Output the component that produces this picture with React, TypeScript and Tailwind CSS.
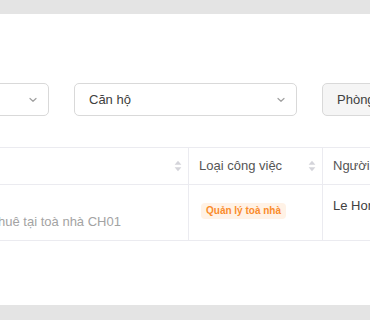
import React from "react";

const Chevron = () => (
  <svg width="10" height="6" viewBox="0 0 10 6" fill="none">
    <path d="M2 1.5 L5 4.3 L8 1.5" stroke="#a0a0a0" strokeWidth="1.2" strokeLinecap="round" strokeLinejoin="round" />
  </svg>
);

const SortIcon = () => (
  <svg width="8" height="12" viewBox="0 0 8 12">
    <path d="M4 0.8 L7.4 4.8 L0.6 4.8 Z" fill="#d4d4da" />
    <path d="M4 11.2 L7.4 7.2 L0.6 7.2 Z" fill="#d4d4da" />
  </svg>
);

export default function App() {
  return (
    <div
      className="w-[370px] h-[320px] overflow-hidden bg-[#e4e4e4] flex flex-col"
      style={{ fontFamily: '"Liberation Sans", Arial, sans-serif' }}
    >
      <div className="h-[14px] shrink-0" />
      <div className="h-[291px] shrink-0 bg-white flex flex-col overflow-hidden">
        <div className="h-[69px] shrink-0" />
        <div className="flex gap-[25px] ml-[-71px] h-[33px] shrink-0">
          <div className="w-[120px] shrink-0 border border-[#d9d9d9] rounded-[5px] flex items-center justify-end pr-[10px]">
            <Chevron />
          </div>
          <div className="w-[223px] shrink-0 border border-[#d9d9d9] rounded-[5px] flex items-center justify-between pl-[14px] pr-[10px]">
            <span className="text-[13px] text-[#404040]">Căn hộ</span>
            <Chevron />
          </div>
          <div className="w-[150px] shrink-0 border border-[#d9d9d9] bg-[#f5f5f5] rounded-[5px] flex items-center pl-[14px]">
            <span className="text-[13px] text-[#404040]">Phòng</span>
          </div>
        </div>
        <div className="h-[31px] shrink-0" />
        <div className="flex flex-col ml-[-100px] border-t border-[#ebebf0]">
          <div className="flex h-[37px] border-b border-[#ebebf0]">
            <div className="w-[289px] shrink-0 flex items-center justify-end pr-[6px] border-r border-[#ebebf0]">
              <SortIcon />
            </div>
            <div className="w-[134px] shrink-0 flex items-center justify-between pl-[10px] pr-[6px] border-r border-[#ebebf0]">
              <span className="text-[13px] text-[#555]">Loại công việc</span>
              <SortIcon />
            </div>
            <div className="w-[150px] shrink-0 flex items-center pl-[10px]">
              <span className="text-[13px] text-[#555] whitespace-nowrap">Người thực hiện</span>
            </div>
          </div>
          <div className="flex h-[56px] border-b border-[#ebebf0]">
            <div className="w-[289px] shrink-0 border-r border-[#ebebf0] flex flex-col justify-end pb-[9px]">
              <span className="text-[13px] text-[#a3a3a3] whitespace-nowrap pl-[67px]">Cho thuê tại toà nhà CH01</span>
            </div>
            <div className="w-[134px] shrink-0 border-r border-[#ebebf0] pl-[12px] pt-[12px]">
              <span className="inline-block bg-[#fff2e6] text-[#fa8c2c] text-[10px] font-bold rounded-[4px] px-[5px] h-[16px] leading-[16px]">
                Quản lý toà nhà
              </span>
            </div>
            <div className="w-[150px] shrink-0 pl-[10px] pt-[8px]">
              <span className="text-[13px] text-[#404040] whitespace-nowrap">Le Hong</span>
            </div>
          </div>
        </div>
      </div>
      <div className="flex-1" />
    </div>
  );
}
